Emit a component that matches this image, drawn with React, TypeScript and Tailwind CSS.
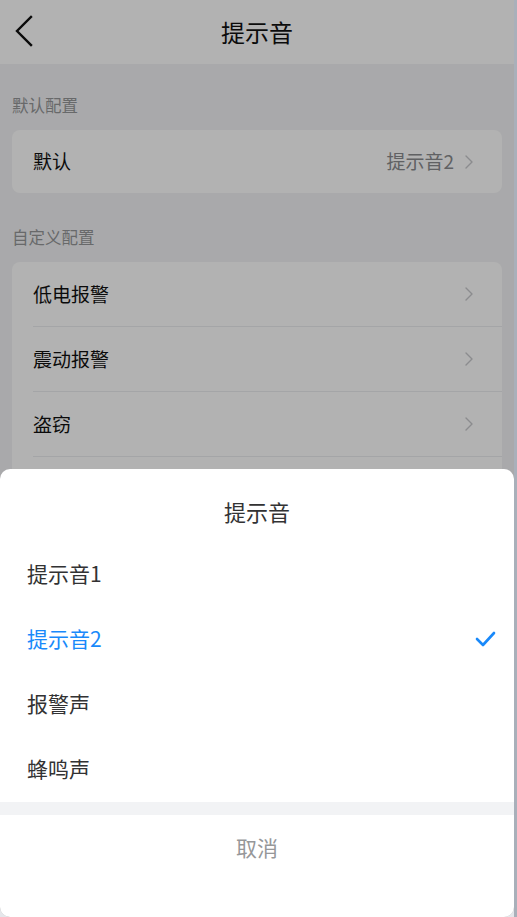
import React from 'react';

const FONT = { fontFamily: '"Noto Sans CJK SC", "Noto Sans", sans-serif' };

const Chevron: React.FC = () => (
  <svg width="10" height="16" viewBox="0 0 10 16" className="shrink-0">
    <path d="M2 2l6 6-6 6" fill="none" stroke="#c8c9cc" strokeWidth="1.4" strokeLinecap="round" strokeLinejoin="round" />
  </svg>
);

const CUSTOM = ['低电报警', '震动报警', '盗窃', '离线报警'];
const OPTIONS = ['提示音1', '提示音2', '报警声', '蜂鸣声'];

export default function App() {
  return (
    <div className="relative flex w-[517px] h-[917px] overflow-hidden bg-[#e5e7eb]" style={FONT}>
      {/* Page behind the sheet */}
      <div className="relative w-[514px] h-full bg-[#f2f3f5] rounded-b-[10px] overflow-hidden">
        <header className="relative flex items-center justify-center h-[64px] bg-white">
          <svg className="absolute left-[14px] top-[15px]" width="22" height="32" viewBox="0 0 22 32">
            <path d="M17 2L3 16l14 14" fill="none" stroke="#111" strokeWidth="2.4" strokeLinecap="square" />
          </svg>
          <h1 className="text-[24px] leading-8 text-[#111]">提示音</h1>
        </header>

        <div className="px-3">
          <p className="pt-[29px] mb-[13px] text-[16.5px] leading-6 text-[#969799]">默认配置</p>
          <div className="flex items-center justify-between h-[63px] pl-[21px] pr-[28px] bg-white rounded-lg">
            <span className="text-[19px] text-[#111]">默认</span>
            <div className="flex items-center gap-[10px]">
              <span className="text-[19px] text-[#8a8b8e]">提示音2</span>
              <Chevron />
            </div>
          </div>

          <p className="pt-8 mb-[13px] text-[16.5px] leading-6 text-[#969799]">自定义配置</p>
          <div className="bg-white rounded-lg">
            {CUSTOM.map((name) => (
              <div key={name} className="pl-[21px]">
                <div className="flex items-center justify-between h-[65px] pr-[28px] border-b border-[#ebedf0]">
                  <span className="text-[19px] text-[#111]">{name}</span>
                  <Chevron />
                </div>
              </div>
            ))}
          </div>
        </div>

        {/* Dim overlay */}
        <div className="absolute inset-0 bg-black/30" />

        {/* Action sheet */}
        <div className="absolute left-0 right-0 bottom-0 h-[448px] bg-white rounded-t-[10px] flex flex-col">
          <div className="pt-[28px] pb-4 text-center text-[22px] leading-7 text-[#323233]">提示音</div>
          {OPTIONS.map((opt) => {
            const active = opt === '提示音2';
            return (
              <div key={opt} className="flex items-center justify-between h-[65px] pl-[27px] pr-[18px]">
                <span className={active ? 'text-[21px] text-[#1989fa]' : 'text-[21px] text-[#323233]'}>{opt}</span>
                {active && (
                  <svg width="22" height="18" viewBox="0 0 22 18">
                    <path d="M3 9l6 6L20 3" fill="none" stroke="#1989fa" strokeWidth="2.6" strokeLinecap="round" strokeLinejoin="round" />
                  </svg>
                )}
              </div>
            );
          })}
          <div className="h-[13px] mt-[1px] bg-[#f2f3f5]" />
          <div className="flex items-center justify-center h-[65px] text-[21px] text-[#969799]">取消</div>
        </div>
      </div>
      <div className="flex-1 bg-[#a9b0ba]" />
    </div>
  );
}
